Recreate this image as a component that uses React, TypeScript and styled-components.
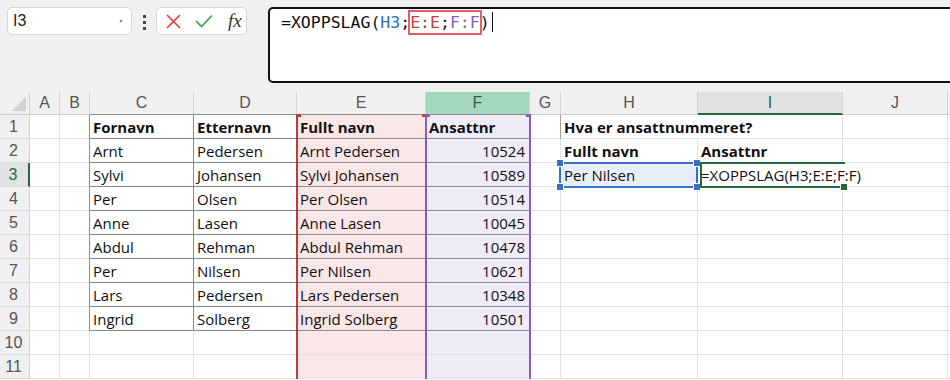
import React from 'react'
import styled, { createGlobalStyle, css } from 'styled-components'

const GlobalStyle = createGlobalStyle`
  html, body {
    margin: 0;
    padding: 0;
    background: #ffffff;
    overflow: hidden;
  }
  body {
    font-family: 'Open Sans', 'Liberation Sans', sans-serif;
  }
`

const COLS = ['A', 'B', 'C', 'D', 'E', 'F', 'G', 'H', 'I', 'J', '']

const ROWS: string[][] = [
  ['', '', 'Fornavn', 'Etternavn', 'Fullt navn', 'Ansattnr', '', 'Hva er ansattnummeret?', '', '', ''],
  ['', '', 'Arnt', 'Pedersen', 'Arnt Pedersen', '10524', '', 'Fullt navn', 'Ansattnr', '', ''],
  ['', '', 'Sylvi', 'Johansen', 'Sylvi Johansen', '10589', '', 'Per Nilsen', '=XOPPSLAG(H3;E:E;F:F)', '', ''],
  ['', '', 'Per', 'Olsen', 'Per Olsen', '10514', '', '', '', '', ''],
  ['', '', 'Anne', 'Lasen', 'Anne Lasen', '10045', '', '', '', '', ''],
  ['', '', 'Abdul', 'Rehman', 'Abdul Rehman', '10478', '', '', '', '', ''],
  ['', '', 'Per', 'Nilsen', 'Per Nilsen', '10621', '', '', '', '', ''],
  ['', '', 'Lars', 'Pedersen', 'Lars Pedersen', '10348', '', '', '', '', ''],
  ['', '', 'Ingrid', 'Solberg', 'Ingrid Solberg', '10501', '', '', '', '', ''],
  ['', '', '', '', '', '', '', '', '', '', ''],
  ['', '', '', '', '', '', '', '', '', '', ''],
]

const GRID = '#e1e1e1'
const DARK = '#8a8a8a'

/* ---------- formula bar ---------- */

const TopBar = styled.div`
  display: flex;
  align-items: flex-start;
  height: 92px;
  box-sizing: border-box;
  padding: 7px 0 0 7px;
  background: #f0f0f0;
`

const Pill = styled.div<{ $w: number }>`
  width: ${(p) => p.$w}px;
  height: 28px;
  box-sizing: border-box;
  display: flex;
  align-items: center;
  background: #ffffff;
  border: 1px solid #d6d6d6;
  border-radius: 5px;
`

const NameText = styled.span`
  flex: 1;
  padding-left: 5px;
  font: 16px 'Liberation Sans', sans-serif;
  color: #222;
`

const Dots = styled.div`
  display: flex;
  flex-direction: column;
  gap: 3px;
  margin: 8px 10px 0 11px;

  span {
    width: 3px;
    height: 3px;
    background: #444;
  }
`

const FxIcons = styled.div`
  display: flex;
  align-items: center;
  gap: 14px;
  padding-left: 9px;
`

const FxText = styled.span`
  font: italic 19px 'Liberation Serif', serif;
  color: #333;
  margin-left: 1px;
`

const Editor = styled.div`
  flex: 1;
  height: 76px;
  margin: 0 -20px 0 21px;
  box-sizing: border-box;
  border: 2px solid #111;
  border-radius: 5px;
  background: #ffffff;
  padding: 1px 0 0 11px;
  font: 16.5px 'DejaVu Sans Mono', 'Liberation Mono', monospace;
  line-height: 25px;
  color: #111;
  white-space: nowrap;
`

const Ref = styled.span<{ $c: string }>`
  color: ${(p) => p.$c};
`

const RefBox = styled.span`
  display: inline-block;
  line-height: 21px;
  outline: 2px solid #e06262;
`

const Caret = styled.span`
  display: inline-block;
  width: 1px;
  height: 20px;
  background: #111;
  vertical-align: -4px;
  margin-left: 2px;
`

/* ---------- sheet ---------- */

const Sheet = styled.div`
  position: relative;
  display: grid;
  grid-template-columns: 30px 30px 30px 104px 103px 129px 104px 31px 137px 145px 105px 1fr;
  grid-template-rows: 23px repeat(11, 24px);
  background: #ffffff;
  width: 950px;
`

const Corner = styled.div`
  background: #f0f0f0;
  border-right: 1px solid #d4d4d4;
  border-bottom: 1px solid #cdcdcd;
  display: flex;
  align-items: flex-end;
  justify-content: flex-end;
  padding: 0 3px 3px 0;
`

type HeadState = 'normal' | 'active' | 'ref'

const ColHead = styled.div<{ $state: HeadState; $dark: boolean }>`
  display: flex;
  align-items: center;
  justify-content: center;
  font: 16px 'Liberation Sans', sans-serif;
  color: #555;
  background: #f0f0f0;
  border-right: 1px solid #d4d4d4;
  border-bottom: 1px solid ${(p) => (p.$dark ? DARK : '#cdcdcd')};
  box-sizing: border-box;
  ${(p) =>
    p.$state === 'ref' &&
    css`
      background: #a2d7ba;
      color: #2f5d43;
    `}
  ${(p) =>
    p.$state === 'active' &&
    css`
      background: #e2e2e2;
      color: #1f6b3d;
      border-bottom: 2px solid #1f6b3d;
    `}
`

const RowHead = styled.div<{ $active: boolean }>`
  display: flex;
  align-items: center;
  justify-content: center;
  font: 16px 'Liberation Sans', sans-serif;
  color: #555;
  background: #f0f0f0;
  border-right: 1px solid #d4d4d4;
  border-bottom: 1px solid #dcdcdc;
  box-sizing: border-box;
  padding-right: 2px;
  ${(p) =>
    p.$active &&
    css`
      background: #e2e2e2;
      color: #1f6b3d;
      border-right: 2px solid #1f6b3d;
    `}
`

const Cell = styled.div<{
  $bg: string
  $bold: boolean
  $num: boolean
  $right: string
  $bottom: string
}>`
  display: flex;
  align-items: center;
  justify-content: ${(p) => (p.$num ? 'flex-end' : 'flex-start')};
  padding: 1px ${(p) => (p.$num ? '4px' : '0')} 0 3px;
  box-sizing: border-box;
  min-width: 0;
  background: ${(p) => p.$bg};
  border-right: 1px solid ${(p) => p.$right};
  border-bottom: 1px solid ${(p) => p.$bottom};
  font-size: 15px;
  font-weight: ${(p) => (p.$bold ? 700 : 400)};
  color: #111;
  white-space: nowrap;
  overflow: visible;
`

/* ---------- overlays (range highlights, selection) ---------- */

const RangeFrame = styled.div<{ $left: number; $width: number; $color: string }>`
  position: absolute;
  top: 22px;
  bottom: 0;
  left: ${(p) => p.$left}px;
  width: ${(p) => p.$width}px;
  box-sizing: border-box;
  border-left: 2px solid ${(p) => p.$color};
  border-right: 2px solid ${(p) => p.$color};
  pointer-events: none;

  &::before,
  &::after {
    content: '';
    position: absolute;
    top: 0;
    width: 5px;
    height: 3px;
    background: ${(p) => p.$color};
  }
  &::before {
    left: -2px;
  }
  &::after {
    right: -2px;
  }
`

const Selection = styled.div<{ $left: number; $width: number; $color: string; $open?: boolean }>`
  position: absolute;
  top: 70px;
  height: 26px;
  left: ${(p) => p.$left}px;
  width: ${(p) => p.$width}px;
  box-sizing: border-box;
  border: 2px solid ${(p) => p.$color};
  ${(p) => p.$open && 'border-right: none;'}
  pointer-events: none;
`

const Handle = styled.span<{ $color: string; $x: 'l' | 'r'; $y: 't' | 'b'; $inset?: number }>`
  position: absolute;
  width: 6px;
  height: 6px;
  background: ${(p) => p.$color};
  border: 1px solid #fff;
  box-sizing: content-box;
  ${(p) => (p.$x === 'l' ? `left: -${p.$inset ?? 5}px;` : `right: -${p.$inset ?? 5}px;`)}
  ${(p) => (p.$y === 't' ? 'top: -5px;' : 'bottom: -5px;')}
`

function cellBg(r: number, c: number) {
  if (c === 4) return '#f9e6e6'
  if (c === 5) return '#efebf7'
  if (r === 3 && c === 7) return '#e8eef8'
  return 'transparent'
}

const inTable = (r: number, c: number) => r >= 1 && r <= 9 && c >= 2 && c <= 5

function rightLine(r: number, c: number) {
  if ((r === 1 && c === 7) || (r === 3 && c === 8)) return 'transparent'
  if (inTable(r, c) || inTable(r, c + 1)) return DARK
  if (r === 1 && c === 6) return '#a0a0a0'
  return GRID
}

function bottomLine(r: number, c: number) {
  if (inTable(r, c)) return DARK
  return GRID
}

export default function App() {
  return (
    <>
      <GlobalStyle />
      <TopBar>
        <Pill $w={125}>
          <NameText>I3</NameText>
          <svg width="10" height="8" viewBox="0 0 10 8" style={{ marginRight: 4 }}>
            <path d="M3 5 L5 3" stroke="#555" strokeWidth="1.2" fill="none" />
          </svg>
        </Pill>
        <Dots>
          <span />
          <span />
          <span />
        </Dots>
        <Pill $w={91}>
          <FxIcons>
            <svg width="15" height="15" viewBox="0 0 15 15">
              <path d="M1 1 L14 14 M14 1 L1 14" stroke="#e5393a" strokeWidth="1.6" fill="none" />
            </svg>
            <svg width="18" height="14" viewBox="0 0 18 14">
              <path d="M1 7 L6.5 12.5 L17 1.5" stroke="#3c9a4e" strokeWidth="1.6" fill="none" />
            </svg>
            <FxText>fx</FxText>
          </FxIcons>
        </Pill>
        <Editor>
          =XOPPSLAG(<Ref $c="#2c6fc6">H3</Ref>;
          <RefBox>
            <Ref $c="#c73b3d">E:E</Ref>;<Ref $c="#8a5cc2">F:F</Ref>
          </RefBox>
          )<Caret />
        </Editor>
      </TopBar>

      <Sheet>
        <Corner>
          <svg width="14" height="14" viewBox="0 0 14 14">
            <path d="M14 0 L14 14 L0 14 Z" fill="#d2d2d2" />
          </svg>
        </Corner>
        {COLS.map((l, c) => (
          <ColHead
            key={'h' + c}
            $state={c === 5 ? 'ref' : c === 8 ? 'active' : 'normal'}
            $dark={c >= 2 && c <= 5}
          >
            {l}
          </ColHead>
        ))}
        {ROWS.map((row, i) => {
          const r = i + 1
          return (
            <React.Fragment key={'r' + r}>
              <RowHead $active={r === 3}>{r}</RowHead>
              {row.map((v, c) => (
                <Cell
                  key={c}
                  $bg={cellBg(r, c)}
                  $bold={r === 1 || (r === 2 && (c === 7 || c === 8))}
                  $num={c === 5 && r > 1}
                  $right={rightLine(r, c)}
                  $bottom={bottomLine(r, c)}
                >
                  {v}
                </Cell>
              ))}
            </React.Fragment>
          )
        })}

        <RangeFrame $left={296} $width={131} $color="#c23a3e" />
        <RangeFrame $left={425} $width={106} $color="#8a5cc2" />
        <Selection $left={559} $width={139} $color="#3a6fc6">
          <Handle $color="#3a6fc6" $x="l" $y="t" />
          <Handle $color="#3a6fc6" $x="r" $y="t" />
          <Handle $color="#3a6fc6" $x="l" $y="b" />
          <Handle $color="#3a6fc6" $x="r" $y="b" />
        </Selection>
        <Selection $left={700} $width={145} $color="#1f6b3d" $open>
          <Handle $color="#1f6b3d" $x="r" $y="b" $inset={3} />
        </Selection>
      </Sheet>
    </>
  )
}
